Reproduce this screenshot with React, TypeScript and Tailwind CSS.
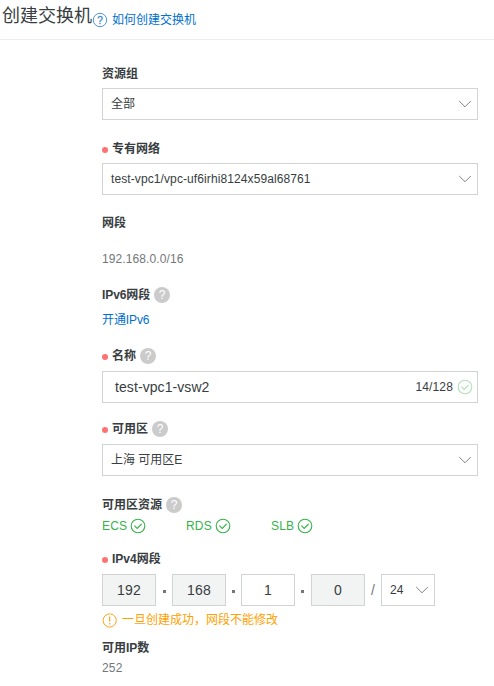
import React from 'react';

function Chevron({ className = '' }: { className?: string }) {
  return (
    <svg className={`shrink-0 ${className}`} width="14" height="8" viewBox="0 0 14 8" fill="none" stroke="#808285" strokeWidth="1">
      <path d="M1.2 1 L7 6.8 L12.8 1" />
    </svg>
  );
}

function CheckCircle({ color, className = '' }: { color: string; className?: string }) {
  return (
    <svg className={`shrink-0 ${className}`} width="16" height="16" viewBox="0 0 16 16" fill="none" stroke={color} strokeWidth="1.1">
      <circle cx="8" cy="8" r="6.8" />
      <path d="M4.4 7.6 L7.2 10.4 L11.6 6" />
    </svg>
  );
}

function Help() {
  return (
    <span className="ml-1 flex size-4 shrink-0 items-center justify-center rounded-full bg-[#cbcbcb] text-[12px] leading-4 font-normal text-white">
      ?
    </span>
  );
}

function Label({ text, required, help, className = '' }: { text: string; required?: boolean; help?: boolean; className?: string }) {
  return (
    <div className={`flex h-4 items-center font-bold ${className}`}>
      {required && <span className="mt-[2px] mr-1 size-1.5 shrink-0 rounded-full bg-[#ff7272]" />}
      <span>{text}</span>
      {help && <Help />}
    </div>
  );
}

function Select({ text, className = '' }: { text: string; className?: string }) {
  return (
    <div className={`flex h-8 w-[376px] items-center justify-between border border-[#d2d3d3] pr-[5px] pl-2 ${className}`}>
      <span>{text}</span>
      <Chevron />
    </div>
  );
}

function Octet({ value, disabled }: { value: string; disabled?: boolean }) {
  return (
    <div className={`flex h-8 w-[54px] shrink-0 items-center justify-center border border-[#d2d3d3] text-[14px] tracking-[0.2px] ${disabled ? 'bg-[#f2f4f4]' : 'bg-white'}`}>
      {value}
    </div>
  );
}

function Dot({ className }: { className: string }) {
  return <span className={`mt-[2px] h-[3px] w-[3px] shrink-0 bg-[#73777a] ${className}`} />;
}

function Resource({ name, className }: { name: string; className: string }) {
  return (
    <div className={`flex items-center ${className}`}>
      <span className="tracking-[0.15px]">{name}</span>
      <CheckCircle color="#35b34a" className="ml-[3px]" />
    </div>
  );
}

export default function App() {
  return (
    <div className="h-[686px] w-[494px] overflow-hidden bg-white font-['Liberation_Sans','Noto_Sans_CJK_SC',sans-serif] text-[12px] leading-4 text-[#373d41]">
      <header className="flex h-10 items-center border-b border-[#ebecec] pl-0.5">
        <h1 className="-mt-[7px] text-[18px] leading-6 whitespace-nowrap">创建交换机</h1>
        <svg className="shrink-0" width="16" height="16" viewBox="0 0 16 16">
          <circle cx="8" cy="8" r="6.7" fill="none" stroke="#4d94d6" strokeWidth="1" />
          <text x="8" y="11.5" textAnchor="middle" fontSize="10" fill="#3d88cf" stroke="#3d88cf" strokeWidth="0.3">?</text>
        </svg>
        <a className="ml-1 text-[#0070cc]">如何创建交换机</a>
      </header>
      <main className="flex flex-col pl-[102px]">
        <Label text="资源组" className="mt-[26px]" />
        <Select text="全部" className="mt-1.5" />
        <Label text="专有网络" required className="mt-[21px]" />
        <div className="tracking-[0.1px]">
          <Select text="test-vpc1/vpc-uf6irhi8124x59al68761" className="mt-1.5" />
        </div>
        <Label text="网段" className="mt-5" />
        <p className="mt-5 tracking-[0.1px] text-[#73777a]">192.168.0.0/16</p>
        <div className="tracking-[-0.1px]">
          <Label text="IPv6网段" help className="mt-5" />
        </div>
        <a className="mt-[9px] h-4 tracking-[-0.1px] text-[#0070cc]">开通IPv6</a>
        <Label text="名称" required help className="mt-5" />
        <div className="mt-[7px] flex h-8 w-[376px] items-center border border-[#d2d3d3] pr-1 pl-3">
          <span className="text-[14px] tracking-[0.08px]">test-vpc1-vsw2</span>
          <span className="ml-auto tracking-[0.15px]">14/128</span>
          <CheckCircle color="#afe0b7" className="ml-1" />
        </div>
        <Label text="可用区" required help className="mt-[18px]" />
        <Select text="上海 可用区E" className="mt-[7px]" />
        <Label text="可用区资源" help className="mt-[21px]" />
        <div className="mt-[5px] flex h-4 items-center text-[#35b34a]">
          <Resource name="ECS" className="w-[84px]" />
          <Resource name="RDS" className="w-[85px]" />
          <Resource name="SLB" className="w-[60px]" />
        </div>
        <Label text="IPv4网段" required className="mt-[17px]" />
        <div className="mt-[7px] flex items-center">
          <Octet value="192" disabled />
          <Dot className="mr-[6px] ml-[7px]" />
          <Octet value="168" disabled />
          <Dot className="mr-[6px] ml-[6px]" />
          <Octet value="1" />
          <Dot className="mr-[7px] ml-[6px]" />
          <Octet value="0" disabled />
          <span className="w-4 text-center text-[14px] text-[#73777a]">/</span>
          <div className="flex h-8 w-[54px] items-center justify-between border border-[#d2d3d3] pr-[5px] pl-2">
            <span>24</span>
            <Chevron />
          </div>
        </div>
        <div className="mt-1.5 flex h-4 items-center text-[#ff9f00]">
          <svg className="shrink-0" width="16" height="16" viewBox="0 0 16 16" fill="none" stroke="#ffa319" strokeWidth="1">
            <circle cx="7.7" cy="8.5" r="6.6" />
            <path d="M7.7 4.5V9.5M7.7 11V12.4" strokeWidth="1.2" />
          </svg>
          <span className="ml-1">一旦创建成功，网段不能修改</span>
        </div>
        <Label text="可用IP数" className="mt-3" />
        <p className="mt-1 tracking-[0.2px] text-[#73777a]">252</p>
      </main>
    </div>
  );
}
